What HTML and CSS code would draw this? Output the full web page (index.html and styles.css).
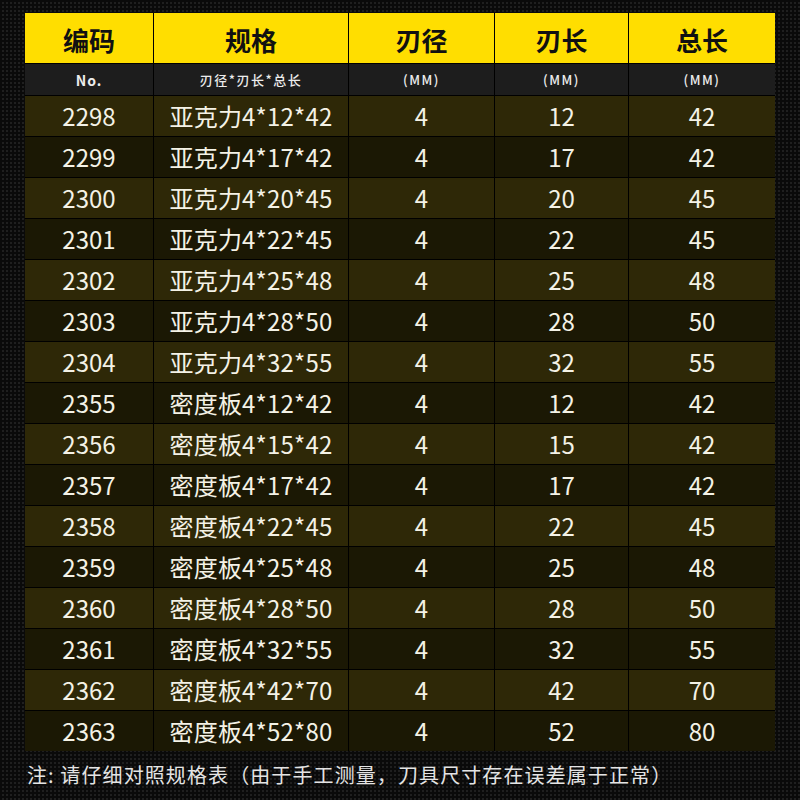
FILE: index.html
```html
<!DOCTYPE html>
<html lang="zh">
<head>
<meta charset="utf-8">
<link rel="stylesheet" href="styles.css">
</head>
<body>
<div class="page">
  <div class="table">
    <div class="h">编码</div><div class="h">规格</div><div class="h">刃径</div><div class="h">刃长</div><div class="h">总长</div>
    <div class="s b">No.</div><div class="s">刃径*刃长*总长</div><div class="s">(MM)</div><div class="s">(MM)</div><div class="s">(MM)</div>

    <div class="c o">2298</div><div class="c o l">亚克力4*12*42</div><div class="c o">4</div><div class="c o">12</div><div class="c o">42</div>
    <div class="c e">2299</div><div class="c e l">亚克力4*17*42</div><div class="c e">4</div><div class="c e">17</div><div class="c e">42</div>
    <div class="c o">2300</div><div class="c o l">亚克力4*20*45</div><div class="c o">4</div><div class="c o">20</div><div class="c o">45</div>
    <div class="c e">2301</div><div class="c e l">亚克力4*22*45</div><div class="c e">4</div><div class="c e">22</div><div class="c e">45</div>
    <div class="c o">2302</div><div class="c o l">亚克力4*25*48</div><div class="c o">4</div><div class="c o">25</div><div class="c o">48</div>
    <div class="c e">2303</div><div class="c e l">亚克力4*28*50</div><div class="c e">4</div><div class="c e">28</div><div class="c e">50</div>
    <div class="c o">2304</div><div class="c o l">亚克力4*32*55</div><div class="c o">4</div><div class="c o">32</div><div class="c o">55</div>
    <div class="c e">2355</div><div class="c e l">密度板4*12*42</div><div class="c e">4</div><div class="c e">12</div><div class="c e">42</div>
    <div class="c o">2356</div><div class="c o l">密度板4*15*42</div><div class="c o">4</div><div class="c o">15</div><div class="c o">42</div>
    <div class="c e">2357</div><div class="c e l">密度板4*17*42</div><div class="c e">4</div><div class="c e">17</div><div class="c e">42</div>
    <div class="c o">2358</div><div class="c o l">密度板4*22*45</div><div class="c o">4</div><div class="c o">22</div><div class="c o">45</div>
    <div class="c e">2359</div><div class="c e l">密度板4*25*48</div><div class="c e">4</div><div class="c e">25</div><div class="c e">48</div>
    <div class="c o">2360</div><div class="c o l">密度板4*28*50</div><div class="c o">4</div><div class="c o">28</div><div class="c o">50</div>
    <div class="c e">2361</div><div class="c e l">密度板4*32*55</div><div class="c e">4</div><div class="c e">32</div><div class="c e">55</div>
    <div class="c o">2362</div><div class="c o l">密度板4*42*70</div><div class="c o">4</div><div class="c o">42</div><div class="c o">70</div>
    <div class="c e">2363</div><div class="c e l">密度板4*52*80</div><div class="c e">4</div><div class="c e">52</div><div class="c e">80</div>
  </div>
  <p class="note">注: 请仔细对照规格表（由于手工测量，刀具尺寸存在误差属于正常）</p>
</div>
</body>
</html>
```

FILE: styles.css
```css
html, body {
  margin: 0;
  padding: 0;
}
body {
  width: 800px;
  height: 800px;
  overflow: hidden;
  background-color: #1f1f1f;
  background-image:
    linear-gradient(90deg, #0a0a0a 2px, transparent 2px),
    linear-gradient(#0a0a0a 2px, transparent 2px);
  background-size: 4px 4px;
  font-family: "Noto Sans CJK SC", "Noto Sans", sans-serif;
}
.page {
  padding: 13px 25px 0 25px;
}
.table {
  display: grid;
  grid-template-columns: 128px 194px 145px 133px 146px;
  grid-template-rows: 50px 31px repeat(16, 40px);
  gap: 1px;
  background: #000;
  width: 750px;
}
.h {
  background: #ffde00;
  color: #111;
  font-weight: 700;
  font-size: 26px;
  display: flex;
  align-items: center;
  justify-content: center;
  padding-top: 2px;
}
.s {
  background: #1d1d1d;
  color: #ececec;
  font-size: 13px;
  font-weight: 500;
  letter-spacing: 1.5px;
  display: flex;
  align-items: center;
  justify-content: center;
}
.s.b {
  font-weight: 700;
  font-size: 14px;
  letter-spacing: 1px;
}
.c {
  color: #f4f2e6;
  font-size: 24px;
  font-weight: 400;
  display: flex;
  align-items: center;
  justify-content: center;
  padding-bottom: 1px;
}
.c.l {
  letter-spacing: 0.2px;
}
.o {
  background: #2e2807;
}
.e {
  background: #1b1804;
}
.note {
  margin: 9px 0 0 2px;
  color: #e4e4e4;
  font-size: 20px;
  letter-spacing: 1.1px;
}
```
